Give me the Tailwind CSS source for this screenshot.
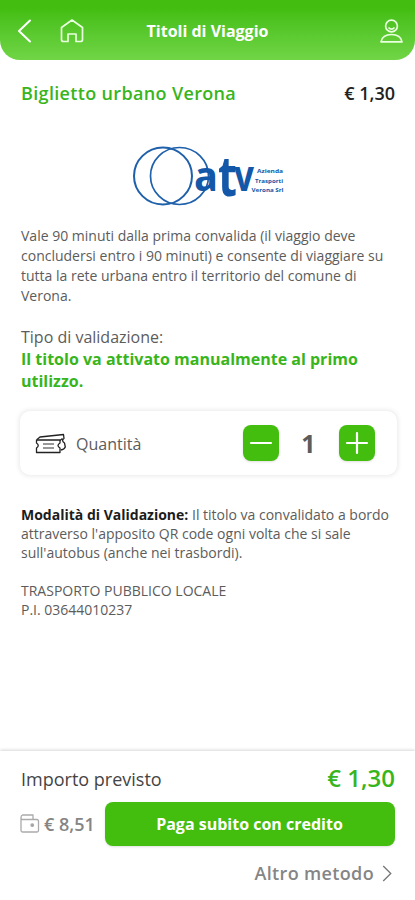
<!DOCTYPE html>
<html lang="it">
<head>
<meta charset="utf-8">
<meta name="viewport" content="width=device-width, initial-scale=1">
<title>Titoli di Viaggio</title>
<script src="https://cdn.jsdelivr.net/npm/@tailwindcss/browser@4"></script>
</head>
<body class="bg-white">
<div class="flex h-[900px] w-[415px] flex-col overflow-hidden bg-white font-['Open_Sans',sans-serif] whitespace-nowrap text-[#5c5c5c]">
  <header class="grid h-[60px] shrink-0 grid-cols-[100px_1fr_100px] items-center rounded-b-[20px] bg-linear-to-b from-[#43be10] from-15% to-[#70d545]">
    <div class="flex items-center pl-[17px] pt-[2px]">
      <svg class="h-[24px] w-[15px]" viewBox="0 0 15 24" fill="none" stroke="white" stroke-width="2" stroke-linecap="round" stroke-linejoin="round"><path d="M13 1.500 2 12l11 10.500"/></svg>
      <svg class="ml-[28px] h-[24px] w-[24px]" viewBox="0 0 24 24" fill="none" stroke="#e9ffdf" stroke-width="1.700" stroke-linejoin="round"><path d="M1.500 8.500 12 1l10.500 7.500v12q0 2-2 2H16V15H8v7.500H3.500q-2 0-2-2z"/></svg>
    </div>
    <h1 class="pt-[2px] text-center text-[16px] font-bold text-white">Titoli di Viaggio</h1>
    <div class="flex justify-end pr-[12px] pt-[2px]">
      <svg class="h-[24px] w-[23px]" viewBox="0 0 23 24" fill="none" stroke="#e9ffdf" stroke-width="1.700" stroke-linejoin="round"><circle cx="11.500" cy="7" r="5.900"/><path d="M8.500 8.500q3 3.200 6 0M1 22.800C2 17.600 6 15.500 11.500 15.500S21 17.600 22 22.800z"/></svg>
    </div>
  </header>

  <main class="flex-1 pl-[21px] pr-[20px]">
    <div class="flex h-[28px] items-center justify-between mt-[19px]">
      <h2 class="text-[18px] font-semibold tracking-[0.34px] text-[#38b51b]">Biglietto urbano Verona</h2>
      <span class="text-[18px] font-semibold text-[#222]">€ 1,30</span>
    </div>

    <svg class="mt-[37px] ml-[111px] h-[64px] w-[156px] overflow-visible" viewBox="0 0 156 64">
      <g fill="none" stroke="#1f60ab"><ellipse cx="31" cy="32" rx="29" ry="28.500" stroke-width="2"/><ellipse cx="47.500" cy="32" rx="29" ry="28.500" stroke-width="1.700"/></g>
      <g fill="#1257a8" font-family="Open Sans, sans-serif" font-weight="700">
        <text x="62" y="47" font-size="42" textLength="24" lengthAdjust="spacingAndGlyphs">a</text>
        <text x="86" y="52" font-size="56" textLength="19" lengthAdjust="spacingAndGlyphs">t</text>
        <text x="102" y="47" font-size="43" textLength="20" lengthAdjust="spacingAndGlyphs">v</text>
        <g font-size="6"><text x="125" y="29" textLength="26" lengthAdjust="spacingAndGlyphs">Azienda</text><text x="123" y="38.500" textLength="28" lengthAdjust="spacingAndGlyphs">Trasporti</text><text x="119.500" y="48" textLength="32" lengthAdjust="spacingAndGlyphs">Verona Srl</text></g>
      </g>
    </svg>

    <p class="mt-[18px] text-[14px] leading-[20px]">Vale 90 minuti dalla prima convalida (il viaggio deve<br>concludersi entro i 90 minuti) e consente di viaggiare su<br>tutta la rete urbana entro il territorio del comune di<br>Verona.</p>

    <p class="mt-[20px] text-[16px] leading-[22px]">Tipo di validazione:</p>
    <p class="text-[16px] leading-[22px] font-bold text-[#38b51b]">Il titolo va attivato manualmente al primo<br>utilizzo.</p>

    <section class="mt-[19px] -ml-[1px] flex h-[64px] w-[377px] items-center rounded-[10px] bg-white pl-[15px] pr-[22px] shadow-[0_0_5px_1px_rgba(0,0,0,0.09)]">
      <svg class="h-[21px] w-[32px]" viewBox="0 0 32 21" fill="none" stroke="#222" stroke-width="1.300" stroke-linejoin="round"><path d="M1.500 7h23.500v3q-4 2.500 0 5v4.500H1.500V15q3.500-2.500 0-5z"/><path d="M2 6.500 5 4 28.500 1.500l.5 4q-3 2 .5 4.500l.8 4q-1 2.500-4.500 3M25 7.500l2.500-2"/><path d="M8 11h11M8 15h11" stroke="#777"/></svg>
      <span class="ml-[9px] pt-[1px] text-[16px]">Quantità</span>
      <div class="ml-auto flex items-center">
        <button class="flex size-[36px] items-center justify-center rounded-[8px] bg-[#43bd0e] shadow-sm" aria-label="Diminuisci"><svg class="size-[24px]" viewBox="0 0 24 24" stroke="white" stroke-width="2.200" stroke-linecap="round"><path d="M2 12h20"/></svg></button>
        <span class="w-[60px] pr-[1px] text-center text-[25px] leading-[34px] font-bold">1</span>
        <button class="flex size-[36px] items-center justify-center rounded-[8px] bg-[#43bd0e] shadow-sm" aria-label="Aumenta"><svg class="size-[24px]" viewBox="0 0 24 24" stroke="white" stroke-width="2.200" stroke-linecap="round"><path d="M2 12h20M12 2v20"/></svg></button>
      </div>
    </section>

    <p class="mt-[30px] text-[14px] leading-[19px]"><b class="font-bold text-[#1c1c1c]">Modalità di Validazione:</b> Il titolo va convalidato a bordo<br>attraverso l'apposito QR code ogni volta che si sale<br>sull'autobus (anche nei trasbordi).</p>
    <p class="mt-[19px] text-[14px] leading-[19px]">TRASPORTO PUBBLICO LOCALE<br>P.I. 03644010237</p>
  </main>

  <footer class="h-[149px] shrink-0 pl-[20px] pr-[20px] pt-[12px] shadow-[0_-1px_3px_rgba(0,0,0,0.16)]">
    <div class="flex h-[32px] items-center justify-between">
      <span class="pl-[1px] text-[18px] text-[#444]">Importo previsto</span>
      <span class="-mt-[2px] text-[24px] leading-[30px] font-semibold text-[#38b51b]">€ 1,30</span>
    </div>
    <div class="mt-[7px] flex h-[44px] items-center">
      <svg class="h-[19px] w-[20px] -mt-[2px]" viewBox="0 0 20 19" fill="none" stroke="#aaa" stroke-width="1.300" stroke-linejoin="round"><path d="M1 4V16.500q0 1.500 1.500 1.500h14.500q1.500 0 1.500-1.500V7q0-1.500-1.500-1.500H2.500Q1 5.500 1 3.500T2.500 1H13v4.500"/><rect x="11" y="10" width="2.500" height="2.300" rx="1" fill="#999"/></svg>
      <span class="ml-[4px] pt-[1px] text-[18px] font-semibold text-[#858585]">€ 8,51</span>
      <button class="ml-auto h-[44px] w-[290px] rounded-[8px] bg-[#43bd0e] pr-[1px] text-[16px] font-bold text-white shadow-sm">Paga subito con credito</button>
    </div>
    <div class="mt-[13px] flex h-[28px] items-center justify-end">
      <span class="text-[18px] font-semibold tracking-[0.35px] text-[#858585]">Altro metodo</span>
      <svg class="ml-[8px] mr-[3px] h-[17px] w-[10px]" viewBox="0 0 10 18" fill="none" stroke="#777" stroke-width="1.400"><path d="m1 1 8 8-8 8"/></svg>
    </div>
  </footer>
</div>
</body>
</html>
